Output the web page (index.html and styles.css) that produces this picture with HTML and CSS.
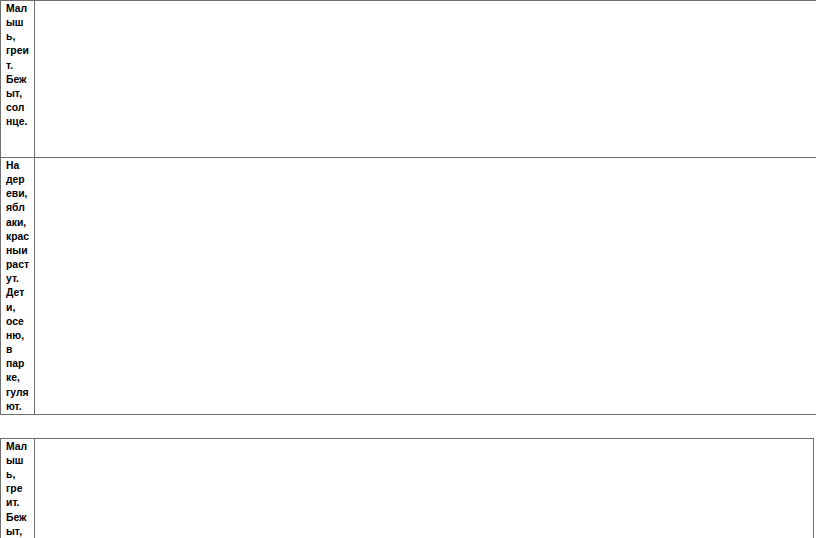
FILE: index.html
```html
<!DOCTYPE html>
<html lang="ru">
<head>
    <meta charset="UTF-8">
    <meta name="viewport" content="width=device-width, initial-scale=1.0">
    <title>Карточки</title>
    <link rel="stylesheet" href="styles.css">
</head>
<body>
    <table class="sheet sheet-wide">
        <colgroup>
            <col class="col-text">
            <col>
        </colgroup>
        <tr class="row-tall">
            <td class="cell-text">Мал<br>ыш<br>ь,<br>греи<br>т.<br>Беж<br>ыт,<br>сол<br>нце.</td>
            <td></td>
        </tr>
        <tr>
            <td class="cell-text">На<br>дер<br>еви,<br>ябл<br>аки,<br>крас<br>ныи<br>раст<br>ут.<br>Дет<br>и,<br>осе<br>ню,<br>в<br>пар<br>ке,<br>гуля<br>ют.</td>
            <td></td>
        </tr>
    </table>

    <table class="sheet sheet-page">
        <colgroup>
            <col class="col-text">
            <col>
        </colgroup>
        <tr class="row-tall">
            <td class="cell-text">Мал<br>ыш<br>ь,<br>гре<br>ит.<br>Беж<br>ыт,<br>сол<br>нце.</td>
            <td></td>
        </tr>
    </table>
</body>
</html>
```

FILE: styles.css
```css
html {
    overflow: hidden;
}
body {
    margin: 0;
    background: #fff;
    font-family: "Liberation Sans", Arial, sans-serif;
    color: #000;
}
.sheet {
    border-collapse: collapse;
    table-layout: fixed;
}
.sheet-wide {
    width: 860px;
}
.sheet-page {
    width: 814px;
    margin-top: 23px;
}
.col-text {
    width: 34px;
}
.sheet td {
    border: 1px solid #6f6f6f;
    vertical-align: top;
    padding: 1px 0 0 5px;
}
.row-tall {
    height: 157px;
}
.cell-text {
    font-size: 10.4px;
    font-weight: bold;
    line-height: 14.15px;
}
```
